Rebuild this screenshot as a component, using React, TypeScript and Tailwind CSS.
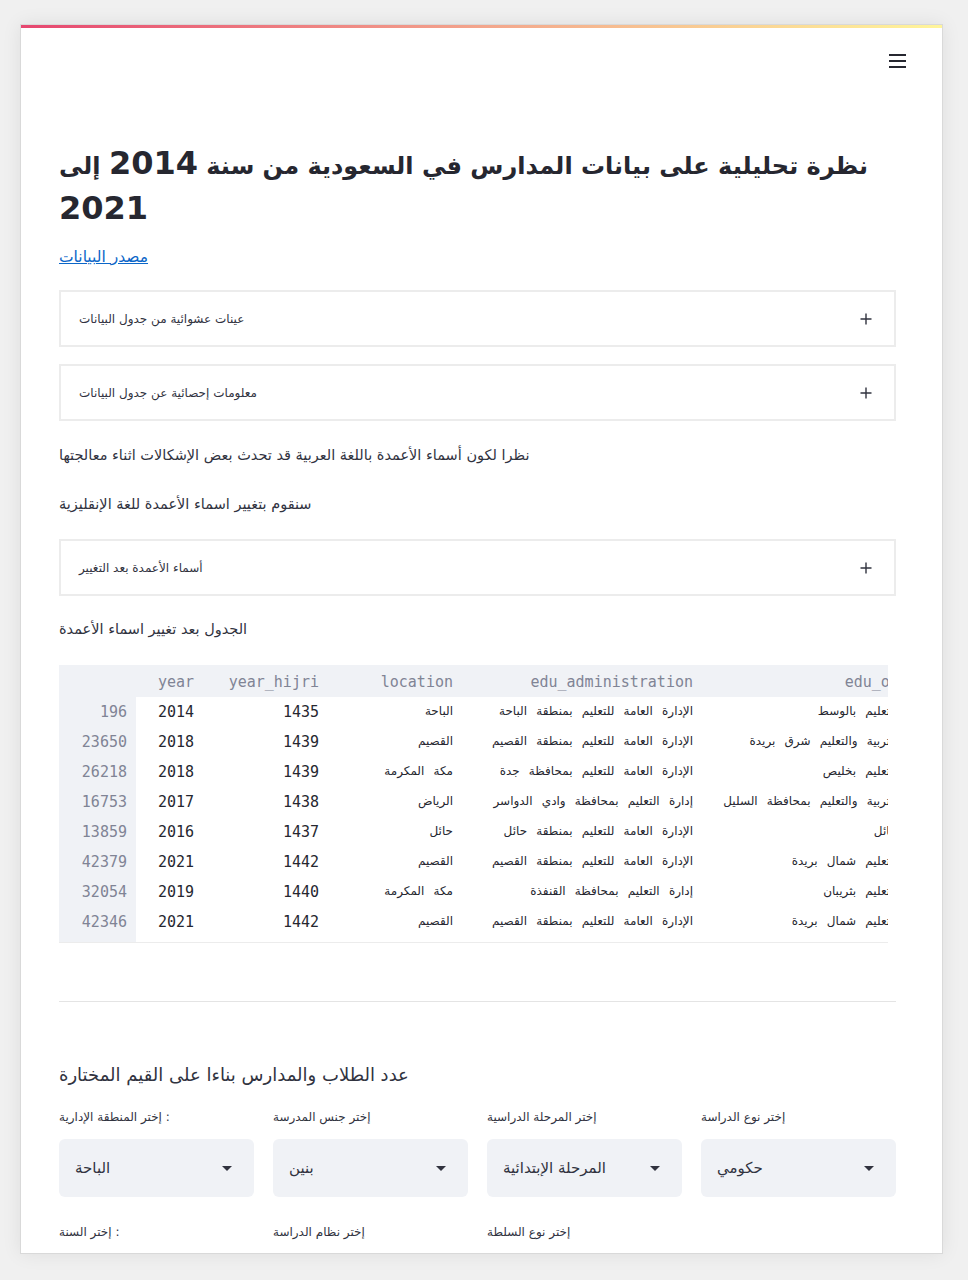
import React from "react";

const AR = { fontFamily: '"DejaVu Sans", "Liberation Sans", sans-serif' };
const MONO = { fontFamily: '"DejaVu Sans Mono", "Liberation Mono", "DejaVu Sans", monospace' };

const rows: [string, string, string, string, string, string][] = [
  ["196", "2014", "1435", "الباحة", "الإدارة العامة للتعليم بمنطقة الباحة", "مكتب التعليم بالوسط"],
  ["23650", "2018", "1439", "القصيم", "الإدارة العامة للتعليم بمنطقة القصيم", "مكتب التربية والتعليم شرق بريدة"],
  ["26218", "2018", "1439", "مكة المكرمة", "الإدارة العامة للتعليم بمحافظة جدة", "مكتب التعليم بخليص"],
  ["16753", "2017", "1438", "الرياض", "إدارة التعليم بمحافظة وادي الدواسر", "مكتب التربية والتعليم بمحافظة السليل"],
  ["13859", "2016", "1437", "حائل", "الإدارة العامة للتعليم بمنطقة حائل", "مكتب حائل"],
  ["42379", "2021", "1442", "القصيم", "الإدارة العامة للتعليم بمنطقة القصيم", "مكتب التعليم شمال بريدة"],
  ["32054", "2019", "1440", "مكة المكرمة", "إدارة التعليم بمحافظة القنفذة", "مكتب التعليم بثريبان"],
  ["42346", "2021", "1442", "القصيم", "الإدارة العامة للتعليم بمنطقة القصيم", "مكتب التعليم شمال بريدة"],
];

const widths = ["w-[77px]", "w-[67px]", "w-[125px]", "w-[134px]", "w-[240px]", "w-[242px]"];
const headers = ["", "year", "year_hijri", "location", "edu_administration", "edu_office"];

function Expander({ label }: { label: string }) {
  return (
    <div className="h-[57px] border-2 border-[#ececec] flex items-center justify-between pl-[18px] pr-[22px]">
      <span className="text-[12px] text-[#31333f]" style={AR}>
        {label}
      </span>
      <svg width="12" height="12" viewBox="0 0 12 12">
        <path d="M6 0.5V11.5M0.5 6H11.5" stroke="#31333f" strokeWidth="1.4" />
      </svg>
    </div>
  );
}

function Select({ value }: { value: string }) {
  return (
    <div className="h-[58px] rounded-md bg-[#f0f2f6] flex items-center justify-between pl-[16px] pr-[22px]">
      <span className="text-[15px] text-[#31333f]" style={AR}>
        {value}
      </span>
      <svg width="10" height="5" viewBox="0 0 10 5">
        <path d="M0 0H10L5 5Z" fill="#31333f" />
      </svg>
    </div>
  );
}

function Label({ text }: { text: string }) {
  return (
    <div className="h-[20px] leading-[20px] text-[12px] text-[#31333f]" style={AR}>
      {text}
    </div>
  );
}

export default function App() {
  return (
    <div className="min-h-[1280px] bg-[#f0f0f0] pt-[24px]">
      <div className="ml-[20px] w-[923px] h-[1230px] overflow-hidden bg-white border border-[#d9d9d9] shadow-[0_0_18px_rgba(0,0,0,0.08)]">
        <div className="h-[3px] bg-[linear-gradient(90deg,#e64770,#f3a58c,#fff59a)]" />
        <div className="flex justify-end pr-[36px] pt-[26px]">
          <svg width="17" height="14" viewBox="0 0 17 14">
            <path d="M0 1H17M0 7H17M0 13H17" stroke="#262730" strokeWidth="2" />
          </svg>
        </div>
        <div className="ml-[38px] w-[837px]">
          <h1 className="mt-[73px] text-[32px] font-bold text-[#262730]" style={AR}>
            <span className="block h-[45px] leading-[45px] whitespace-nowrap overflow-visible">
              <span className="text-[24px]">نظرة تحليلية على بيانات المدارس في السعودية من سنة </span>
              2014
              <span className="text-[24px]"> إلى</span>
            </span>
            <span className="block h-[45px] leading-[45px]">2021</span>
          </h1>
          <div className="mt-[13px] h-[24px] leading-[24px]">
            <a className="text-[15.5px] text-[#0b66c8] underline" style={AR}>
              مصدر البيانات
            </a>
          </div>
          <div className="mt-[22px]">
            <Expander label="عينات عشوائية من جدول البيانات" />
          </div>
          <div className="mt-[17px]">
            <Expander label="معلومات إحصائية عن جدول البيانات" />
          </div>
          <p className="mt-[22px] h-[24px] leading-[24px] text-[14.5px] text-[#31333f]" style={AR}>
            نظرا لكون أسماء الأعمدة باللغة العربية قد تحدث بعض الإشكالات اثناء معالجتها
          </p>
          <p className="mt-[25px] h-[24px] leading-[24px] text-[14.5px] text-[#31333f]" style={AR}>
            سنقوم بتغيير اسماء الأعمدة للغة الإنقليزية
          </p>
          <div className="mt-[23px]">
            <Expander label="أسماء الأعمدة بعد التغيير" />
          </div>
          <p className="mt-[21px] h-[24px] leading-[24px] text-[14.5px] text-[#31333f]" style={AR}>
            الجدول بعد تغيير اسماء الأعمدة
          </p>

          <div className="mt-[24px] w-[829px] h-[278px] overflow-hidden border-b border-[#ececec] relative">
            <div className="absolute left-0 top-0 bottom-0 w-[77px] bg-[#f0f2f6]" />
            <div className="relative w-[885px]">
              <div className="flex h-[32px] pt-[2px] bg-[#f0f2f6] items-center" style={MONO}>
                {headers.map((h, i) => (
                  <div
                    key={i}
                    className={`${widths[i]} shrink-0 text-right pr-[9px] text-[15px] text-[#808495] whitespace-nowrap`}
                  >
                    {h}
                  </div>
                ))}
              </div>
              {rows.map((r, ri) => (
                <div key={ri} className="flex h-[30px] items-center">
                  {r.map((c, ci) => (
                    <div
                      key={ci}
                      className={`${widths[ci]} shrink-0 text-right pr-[9px] whitespace-nowrap ${
                        ci === 0
                          ? "text-[15px] text-[#808495]"
                          : ci < 3
                          ? "text-[15px] text-[#262730]"
                          : "text-[12px] text-[#262730]"
                      } ${ci === 1 ? "text-left pl-[22px]" : ""}`}
                      style={ci < 3 ? MONO : { fontFamily: '"Liberation Mono", "DejaVu Sans", monospace', wordSpacing: "2px" }}
                    >
                      {c}
                    </div>
                  ))}
                </div>
              ))}
            </div>
          </div>

          <div className="mt-[58px] h-px bg-[#e4e4e4]" />

          <h3 className="mt-[57px] h-[32px] leading-[32px] text-[18px] text-[#31333f]" style={AR}>
            عدد الطلاب والمدارس بناءا على القيم المختارة
          </h3>

          <div className="mt-[16px] grid grid-cols-4 gap-x-[19px]">
            <Label text="إختر المنطقة الإدارية :" />
            <Label text="إختر جنس المدرسة" />
            <Label text="إختر المرحلة الدراسية" />
            <Label text="إختر نوع الدراسة" />
          </div>
          <div className="mt-[12px] grid grid-cols-4 gap-x-[19px]">
            <Select value="الباحة" />
            <Select value="بنين" />
            <Select value="المرحلة الإبتدائية" />
            <Select value="حكومي" />
          </div>
          <div className="mt-[25px] grid grid-cols-4 gap-x-[19px]">
            <Label text="إختر السنة :" />
            <Label text="إختر نظام الدراسة" />
            <Label text="إختر نوع السلطة" />
            <div />
          </div>
        </div>
      </div>
    </div>
  );
}
